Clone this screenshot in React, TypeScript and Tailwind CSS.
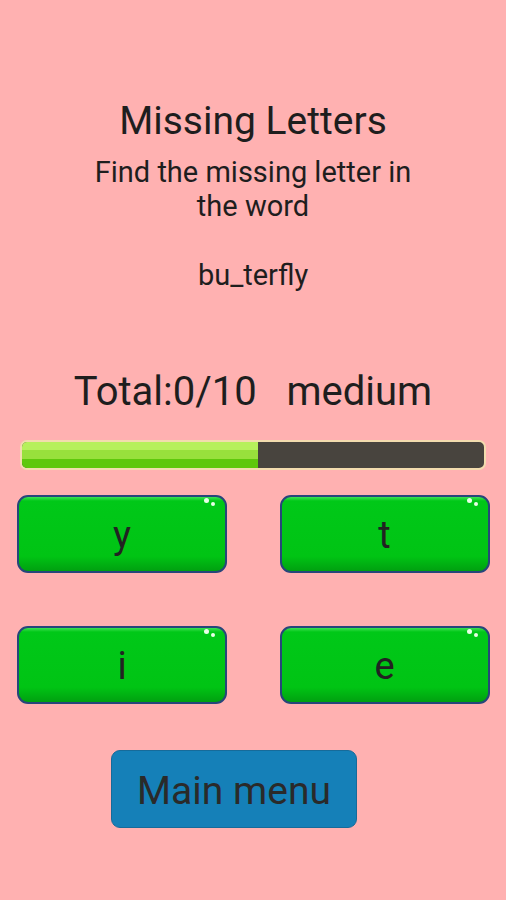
import React from 'react';

const LetterButton: React.FC<{ letter: string }> = ({ letter }) => (
  <button className="relative h-[78px] w-[210px] rounded-[11px] border-2 border-[#27467a] bg-[linear-gradient(to_bottom,#3ee052_0px,#00c818_4px,#00c414_80%,#00a010_100%)] text-[38px] text-[#222] leading-none">
    <span className="relative top-[1px]">{letter}</span>
    <span className="absolute right-[16px] top-[1px] h-[5px] w-[5px] rounded-full bg-[#e8ffe8]" />
    <span className="absolute right-[10px] top-[5px] h-[4px] w-[4px] rounded-full bg-[#e8ffe8]" />
  </button>
);

const App: React.FC = () => {
  const letters = ['y', 't', 'i', 'e'];
  const progress = 51;

  return (
    <div className="min-h-[900px] w-full bg-[#ffb1b1] font-['Roboto',sans-serif] text-[#1e1e1e]">
      <div className="flex flex-col items-center pt-[98px]">
        <h1 className="text-[39px] leading-[46px]">Missing Letters</h1>
        <p className="mt-[11px] w-[340px] text-center text-[29px] leading-[34px]">
          Find the missing letter in the word
        </p>
        <p className="mt-[35px] text-[29px] leading-[34px]">bu_terfly</p>
        <p className="mt-[77px] whitespace-pre text-[40px] leading-[46px]">Total:0/10   medium</p>
      </div>

      {/* progress */}
      <div className="mx-[20px] mt-[25px] h-[30px] rounded-[7px] border-2 border-[#f2dcae] bg-[#48443e] overflow-hidden">
        <div
          className="h-full bg-[linear-gradient(to_bottom,#b6f05c_0%,#b6f05c_30%,#98e03c_30%,#98e03c_65%,#5ec80c_65%,#5ec80c_100%)]"
          style={{ width: `${progress}%` }}
        />
      </div>

      <div className="mt-[25px] grid grid-cols-2 gap-x-[53px] gap-y-[53px] px-[17px]">
        {letters.map((l) => (
          <LetterButton key={l} letter={l} />
        ))}
      </div>

      <div className="mt-[46px] pl-[111px]">
        <button className="h-[78px] w-[246px] rounded-[9px] border border-[#166b9a] bg-[#1580b8] pt-[4px] text-[39px] text-[#2a2a2a]">
          Main menu
        </button>
      </div>
    </div>
  );
};

export default App;
